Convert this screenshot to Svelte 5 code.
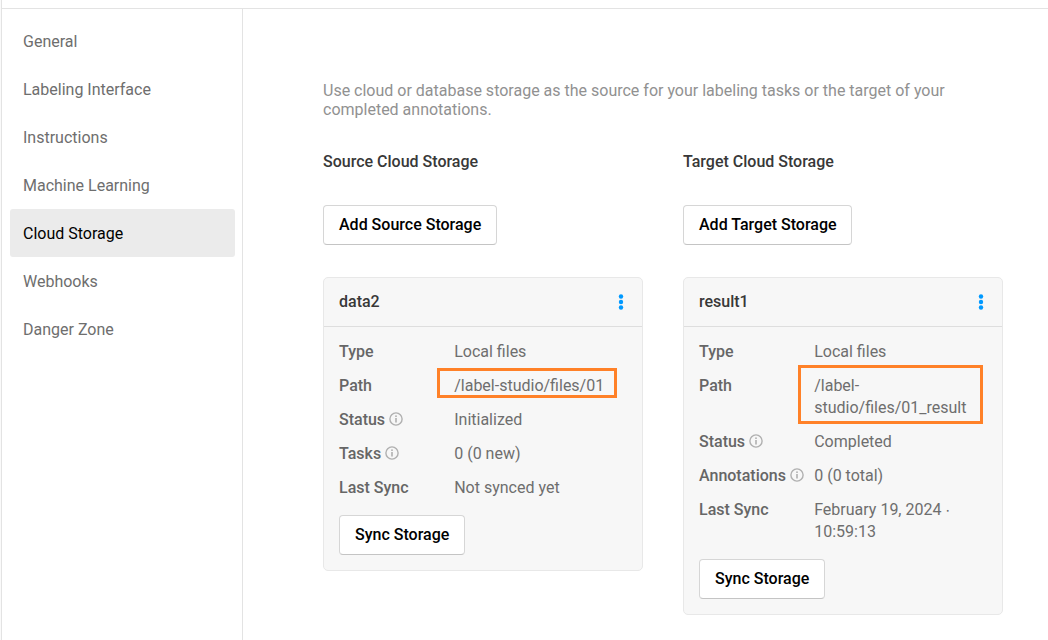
<script>
  const menu = [
    'General',
    'Labeling Interface',
    'Instructions',
    'Machine Learning',
    'Cloud Storage',
    'Webhooks',
    'Danger Zone',
  ];
  const active = 'Cloud Storage';

  const storages = [
    {
      title: 'Source Cloud Storage',
      action: 'Add Source Storage',
      name: 'data2',
      rows: [
        { label: 'Type', value: 'Local files' },
        { label: 'Path', value: '/label-studio/files/01', mark: 'single' },
        { label: 'Status', value: 'Initialized', info: true },
        { label: 'Tasks', value: '0 (0 new)', info: true },
        { label: 'Last Sync', value: 'Not synced yet' },
      ],
    },
    {
      title: 'Target Cloud Storage',
      action: 'Add Target Storage',
      name: 'result1',
      rows: [
        { label: 'Type', value: 'Local files' },
        { label: 'Path', value: '/label-studio/files/01_result', mark: 'double' },
        { label: 'Status', value: 'Completed', info: true },
        { label: 'Annotations', value: '0 (0 total)', info: true },
        { label: 'Last Sync', value: 'February 19, 2024 ∙ 10:59:13' },
      ],
    },
  ];
</script>

<div class="page">
  <div class="topbar"></div>
  <div class="layout">
    <nav class="sidebar">
      {#each menu as item}
        <div class="item" class:active={item === active}><span>{item}</span></div>
      {/each}
    </nav>
    <main class="content">
      <p class="intro">
        Use cloud or database storage as the source for your labeling tasks or the target of your completed annotations.
      </p>
      <div class="columns">
        {#each storages as s}
          <section class="column">
            <h3>{s.title}</h3>
            <button class="btn">{s.action}</button>
            <div class="card">
              <header>
                <span>{s.name}</span>
                <svg width="6" height="16" viewBox="0 0 6 16" fill="#0099ff">
                  <circle cx="3" cy="2.5" r="2.2" />
                  <circle cx="3" cy="8" r="2.2" />
                  <circle cx="3" cy="13.5" r="2.2" />
                </svg>
              </header>
              <div class="body">
                {#each s.rows as row}
                  <div class="row">
                    <div class="label">
                      <span>{row.label}</span>
                      {#if row.info}
                        <svg width="14" height="14" viewBox="0 0 14 14">
                          <circle cx="7" cy="7" r="6.1" fill="none" stroke="#b0b0b0" stroke-width="1.4" />
                          <rect x="6.2" y="3.4" width="1.6" height="1.6" fill="#b0b0b0" />
                          <rect x="6.2" y="6" width="1.6" height="4.5" fill="#b0b0b0" />
                        </svg>
                      {/if}
                    </div>
                    <div class="value">
                      {row.value}
                      {#if row.mark}<span class="mark {row.mark}"></span>{/if}
                    </div>
                  </div>
                {/each}
                <button class="btn sync">Sync Storage</button>
              </div>
            </div>
          </section>
        {/each}
      </div>
    </main>
  </div>
</div>

<style>
  :global(body) {
    margin: 0;
    background: #fff;
  }
  .page {
    box-sizing: border-box;
    width: 1048px;
    height: 640px;
    overflow: hidden;
    display: flex;
    flex-direction: column;
    border-left: 1px solid #fafafa;
    font: 400 16px/22px Roboto, sans-serif;
    color: #666;
  }
  .topbar {
    flex: none;
    height: 8px;
    border-left: 1px solid #e3e3e3;
    border-bottom: 1px solid #e3e3e3;
  }
  .layout {
    flex: 1;
    display: flex;
    min-height: 0;
    border-left: 1px solid #e3e3e3;
  }
  .sidebar {
    box-sizing: border-box;
    flex: none;
    width: 241px;
    padding: 8px 7px 0 8px;
    border-right: 1px solid #e3e3e3;
    color: #6e6e6e;
  }
  .item {
    box-sizing: border-box;
    height: 48px;
    padding: 2px 13px 0;
    display: flex;
    align-items: center;
    border-radius: 3px;
  }
  .item.active {
    background: #ebebeb;
    color: #000;
  }
  .content {
    flex: 1;
    padding: 72px 0 0 80px;
  }
  .intro {
    width: 680px;
    margin: 0;
    line-height: 19px;
    color: #919191;
  }
  .columns {
    display: flex;
    gap: 40px;
    margin-top: 32px;
  }
  .column {
    width: 320px;
    display: flex;
    flex-direction: column;
    align-items: flex-start;
  }
  h3 {
    margin: 0 0 32px;
    font-size: 16px;
    font-weight: 500;
    line-height: 22px;
    color: #383838;
  }
  .btn {
    box-sizing: border-box;
    height: 40px;
    padding: 0 14.7px 0 15px;
    border: 1px solid #d6d6d6;
    border-bottom-color: #c4c4c4;
    border-radius: 4px;
    background: #fff;
    font: 500 16px/22px Roboto, sans-serif;
    color: #000;
    white-space: nowrap;
  }
  .card {
    box-sizing: border-box;
    width: 320px;
    margin-top: 32px;
    border: 1px solid #e8e8e8;
    border-radius: 5px;
    background: #f7f7f7;
  }
  header {
    height: 48px;
    padding: 0 18px 0 15px;
    display: flex;
    align-items: center;
    justify-content: space-between;
    border-bottom: 1px solid #dedede;
    font-weight: 500;
    color: #383838;
  }
  .body {
    padding: 8px 15px 15px;
  }
  .row {
    display: flex;
    padding: 6px 0;
  }
  .label {
    flex: none;
    width: 115.2px;
    height: 22px;
    display: flex;
    align-items: center;
    gap: 4px;
    font-weight: 500;
  }
  .label svg {
    margin-bottom: 2px;
  }
  .value {
    position: relative;
    flex: 1;
    color: #6e6e6e;
  }
  .sync {
    display: block;
    margin-top: 10px;
  }
  .mark {
    position: absolute;
    box-sizing: border-box;
    border: 3px solid #ff8128;
  }
  .mark.single {
    left: -17px;
    top: -7px;
    width: 180px;
    height: 30px;
  }
  .mark.double {
    left: -16px;
    top: -10px;
    width: 185px;
    height: 59px;
  }
</style>
